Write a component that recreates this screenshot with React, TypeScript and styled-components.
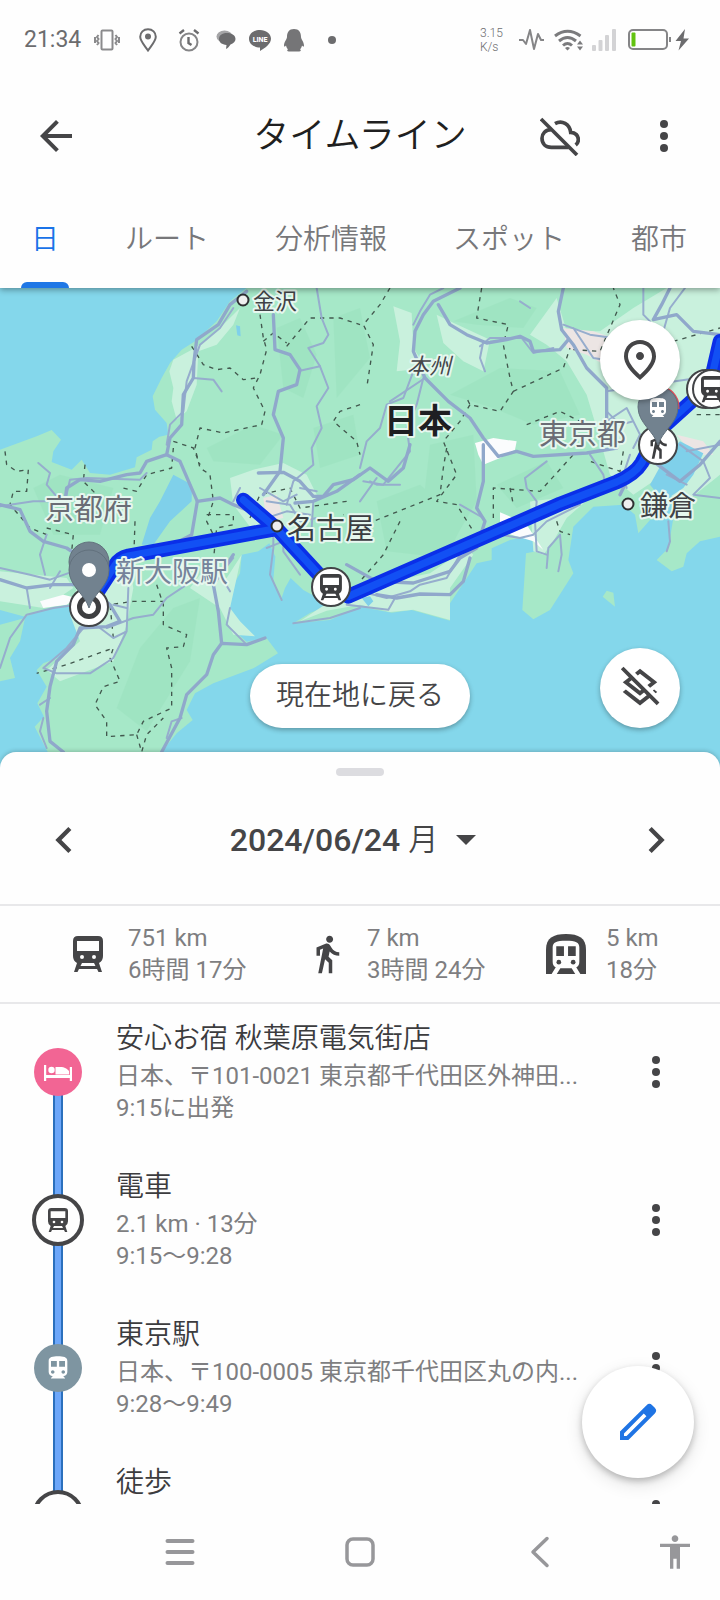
import React from "react";
import styled, { createGlobalStyle, css } from "styled-components";
import {
  MdAccessibility,
  MdArrowBack,
  MdChevronLeft,
  MdChevronRight,
  MdDirectionsTransit,
  MdDirectionsWalk,
  MdOutlineLayersClear,
  MdOutlinePlace,
} from "react-icons/md";

const sans = `Roboto, "Noto Sans CJK JP", sans-serif`;
const ink = "#454547";
const muted = "#7e7e81";

const GlobalStyle = createGlobalStyle`
  * { box-sizing: border-box; }
  body { margin: 0; background: #fefefe; font-family: ${sans}; color: ${ink}; }
  button { margin: 0; padding: 0; border: 0; background: none; font: inherit; color: inherit; cursor: pointer; }
`;

const Page = styled.div`
  display: flex;
  flex-direction: column;
  height: 100vh;
  background: #fefefe;
`;

/* ---------- status bar ---------- */

const StatusBar = styled.div`
  display: flex;
  justify-content: space-between;
  align-items: center;
  height: 80px;
  padding: 0 18px 0 24px;
  color: #6c6c6e;
`;

const StatusGroup = styled.div`
  display: flex;
  align-items: center;
`;

const Clock = styled.time`
  width: 62px;
  font-size: 23px;
  line-height: 32px;
`;

const Slot = styled.span<{ $w: number }>`
  display: flex;
  justify-content: center;
  width: ${(p) => p.$w}px;
`;

const Speed = styled.span`
  width: 38px;
  font-size: 12px;
  font-weight: 300;
  line-height: 14px;
`;

/* ---------- app bar and tabs ---------- */

const Header = styled.header`
  position: relative;
  z-index: 1;
  flex: none;
  background: #fefefe;
  box-shadow: 0 2px 6px rgba(0, 0, 0, 0.35);
`;

const AppBar = styled.div`
  display: grid;
  grid-template-columns: 1fr auto 1fr;
  align-items: center;
  height: 112px;
  padding: 0 28px;
`;

const Title = styled.h1`
  margin: 0;
  font-size: 36px;
  font-weight: 350;
  line-height: 48px;
  color: #1f1f20;
`;

const Actions = styled.div`
  display: flex;
  justify-content: flex-end;
  gap: 48px;
`;

const IconButton = styled.button`
  display: flex;
  flex: none;
  align-items: center;
  justify-content: center;
  width: 56px;
  height: 56px;
  color: ${ink};
`;

const Tabs = styled.nav`
  display: flex;
  gap: 66px;
  height: 96px;
  padding-left: 31px;
  overflow: hidden;
`;

const Tab = styled.button<{ $active?: boolean }>`
  position: relative;
  flex: none;
  height: 96px;
  font-size: 28px;
  font-weight: 350;
  line-height: 40px;
  white-space: nowrap;
  color: ${(p) => (p.$active ? "#1a73e8" : "#77777a")};
  ${(p) =>
    p.$active &&
    css`
      &::after {
        content: "";
        position: absolute;
        bottom: 0;
        left: -10px;
        right: -10px;
        height: 6px;
        border-radius: 6px 6px 0 0;
        background: #1f77e6;
      }
    `}
`;

/* ---------- map ---------- */

const MapArea = styled.section`
  position: relative;
  flex: none;
  height: 480px;
  background: #84d7eb;
`;

const MapSvg = styled.svg`
  display: block;
  width: 100%;
  height: 100%;
`;

const floating = css`
  position: absolute;
  display: flex;
  align-items: center;
  justify-content: center;
  background: #fff;
  color: ${ink};
  box-shadow: 0 2px 5px rgba(0, 0, 0, 0.3);
`;

const MapButton = styled.button<{ $edge: "top" | "bottom" }>`
  ${floating}
  right: 40px;
  ${(p) => (p.$edge === "top" ? "top: 32px;" : "bottom: 40px;")}
  width: 80px;
  height: 80px;
  border-radius: 50%;
`;

const RecenterRow = styled.div`
  position: absolute;
  left: 0;
  right: 0;
  bottom: 40px;
  display: flex;
  justify-content: center;
  pointer-events: none;
`;

const Recenter = styled.button`
  ${floating}
  position: static;
  height: 64px;
  padding: 0 26px;
  border-radius: 32px;
  font-size: 28px;
  font-weight: 350;
  line-height: 40px;
  pointer-events: auto;
`;

/* ---------- bottom sheet ---------- */

const Sheet = styled.main`
  position: relative;
  display: flex;
  flex: 1 1 0;
  flex-direction: column;
  min-height: 0;
  margin-top: -16px;
  border-radius: 16px 16px 0 0;
  background: #fefefe;
  box-shadow: 0 -1px 4px rgba(0, 0, 0, 0.2);
`;

const Handle = styled.div`
  flex: none;
  width: 48px;
  height: 8px;
  margin: 16px auto 0;
  border-radius: 4px;
  background: #dcdce0;
`;

const DateBar = styled.div`
  display: flex;
  flex: none;
  align-items: center;
  justify-content: space-between;
  height: 130px;
  padding: 0 36px;
  border-bottom: 2px solid #e8e8ea;
`;

const DateButton = styled.button`
  display: flex;
  align-items: center;
  gap: 8px;
  padding-right: 14px;
  font-size: 32px;
  font-weight: 500;
  line-height: 40px;
`;

const Weekday = styled.span`
  font-size: 30px;
  font-weight: 350;
`;

const Caret = styled.span`
  margin-left: 10px;
  border: 10px solid transparent;
  border-top-color: ${ink};
  border-bottom: 0;
`;

const Stats = styled.section`
  display: grid;
  flex: none;
  grid-template-columns: 1fr 1fr 146px;
  align-items: center;
  height: 98px;
  padding: 0 48px;
  border-bottom: 2px solid #e8e8ea;
`;

const Stat = styled.div`
  display: flex;
  align-items: center;
`;

const StatIcon = styled.span`
  display: flex;
  flex: none;
  justify-content: center;
  width: 80px;
`;

const Line = styled.p`
  margin: 0;
  font-size: 24px;
  font-weight: 400;
  line-height: 32px;
  white-space: nowrap;
  color: ${muted};
`;

const ListArea = styled.div`
  position: relative;
  flex: 1 1 0;
  min-height: 0;
`;

const List = styled.ol`
  height: 100%;
  margin: 0;
  padding: 0;
  overflow-y: auto;
  list-style: none;
  scrollbar-width: none;
`;

const Entry = styled.li`
  display: grid;
  grid-template-columns: 116px 1fr 128px;
  height: 148px;
`;

const Rail = styled.div`
  display: grid;
  justify-items: center;
`;

const Track = styled.span<{ $first?: boolean }>`
  grid-area: 1 / 1;
  width: 10px;
  margin-top: ${(p) => (p.$first ? 68 : 0)}px;
  border: solid #2b70bd;
  border-width: 0 2px;
  background: #6da7fa;
`;

const Node = styled.span<{ $fill?: string }>`
  z-index: 1;
  display: flex;
  grid-area: 1 / 1;
  align-items: center;
  justify-content: center;
  width: ${(p) => (p.$fill ? 48 : 52)}px;
  height: ${(p) => (p.$fill ? 48 : 52)}px;
  margin-top: ${(p) => (p.$fill ? 44 : 42)}px;
  border: ${(p) => (p.$fill ? "0" : `4px solid ${ink}`)};
  border-radius: 50%;
  background: ${(p) => p.$fill || "#fefefe"};
  color: ${(p) => (p.$fill ? "#fff" : ink)};
`;

const Details = styled.div`
  min-width: 0;
  padding-top: 17px;
`;

const Place = styled.h2`
  margin: 0 0 3px;
  font-size: 28px;
  font-weight: 350;
  line-height: 36px;
  color: #3c3c3e;
`;

const EntryMenu = styled(IconButton)`
  margin: 40px 0 0 36px;
`;

const Fab = styled.button`
  ${floating}
  right: 26px;
  bottom: 26px;
  width: 112px;
  height: 112px;
  border-radius: 50%;
  color: #1f74e4;
  box-shadow: 0 3px 6px rgba(0, 0, 0, 0.22), 0 6px 18px rgba(0, 0, 0, 0.12);
`;

const SystemNav = styled.nav`
  position: relative;
  z-index: 1;
  display: grid;
  flex: none;
  grid-template-columns: 2fr 2fr 2fr 1fr;
  height: 96px;
  padding-left: 12.5%;
  background: #fefefe;
`;

const NavButton = styled.button`
  display: flex;
  align-items: center;
  justify-content: center;
  color: #97979a;
`;

/* ---------- icons ---------- */

const Dots = () => (
  <svg width="8" height="32" viewBox="0 0 8 32" fill="currentColor" aria-hidden>
    <circle cx="4" cy="4" r="4" />
    <circle cx="4" cy="16" r="4" />
    <circle cx="4" cy="28" r="4" />
  </svg>
);

const CloudOff = () => (
  <svg width="40" height="39" viewBox="0 0 120 117" fill="none" stroke="currentColor" strokeWidth="11" aria-hidden>
    <path d="M3 6 111 114" />
    <path d="M34 38C16 38 6 50 6 64 6 80 17 91 34 91H86" />
    <path d="M45 20C66 8 89 21 92 46 107 46 115 57 115 68 115 75 112 80 107 84" />
  </svg>
);

const trainShape = (
  <path
    fillRule="evenodd"
    d="M5 0H25Q30 0 30 5V20Q30 25 26 27L29 36H25.500L24 33H6L4.500 36H1L4 27Q0 25 0 20V5Q0 0 5 0ZM4 5V15H26V5ZM9 19a2 2 0 1 0 0 4 2 2 0 0 0 0-4ZM21 19a2 2 0 1 0 0 4 2 2 0 0 0 0-4ZM9 27 7.500 30H22.500L21 27Z"
  />
);

const TrainIcon = ({ height }: { height: number }) => (
  <svg height={height} width={(height * 30) / 36} viewBox="0 0 30 36" fill="currentColor" aria-hidden>
    {trainShape}
  </svg>
);

const SubwayIcon = () => (
  <svg width="40" height="40" viewBox="0 0 39 39" fill="currentColor" aria-hidden>
    <path d="M0 39V15C0 4 7 0 19.500 0S39 4 39 15V39Z" />
    <path d="M6.500 27V13C6.500 8 10 6.500 19.500 6.500S32.500 8 32.500 13V27Q32.500 31 29.500 32.500L33.500 39H28.500L25 33.500H14L10.500 39H5.500L9.500 32.500Q6.500 31 6.500 27Z" fill="#fefefe" />
    <path d="M10 12h7.500v9.500H10ZM21.500 12H29v9.500h-7.500Z" />
    <circle cx="12.500" cy="27.500" r="2.300" />
    <circle cx="26.500" cy="27.500" r="2.300" />
  </svg>
);

const BedIcon = () => (
  <svg width="28" height="17" viewBox="0 0 28 17" fill="currentColor" aria-hidden>
    <path d="M0 1h2.200V11H25.800V3H28V17h-2.200V14H2.200V17H0Z" />
    <circle cx="7.500" cy="6" r="3.200" />
    <path d="M11.500 3h4.500c5 0 7 2 9 4v3.500H11.500Z" />
  </svg>
);

const Pencil = () => (
  <svg width="48" height="48" viewBox="0 0 24 24" fill="currentColor" aria-hidden>
    <path
      fillRule="evenodd"
      d="M3 21V16.800L16.300 3.600a2 2 0 0 1 2.800 0l1.300 1.300a2 2 0 0 1 0 2.800L7.200 21ZM5 19h1.300L16.200 9.100 14.900 7.800 5 17.700Z"
    />
  </svg>
);

const Vibrate = () => (
  <svg width="26" height="22" viewBox="0 0 26 22" fill="none" stroke="#8a8a8c" strokeWidth="2" aria-hidden>
    <rect x="7.500" y="1.500" width="11" height="19" rx="1" />
    <path d="M4.500 6 3 8l1.500 2L3 12l1.500 2L3 16M1 8v6M21.500 6 23 8l-1.500 2 1.500 2-1.500 2 1.500 2M25 8v6" />
  </svg>
);

const PlaceSmall = () => (
  <svg width="18" height="24" viewBox="0 0 18 24" fill="none" stroke="#6c6c6e" strokeWidth="2" aria-hidden>
    <path d="M9 1.200C13.500 1.200 16.800 4.500 16.800 8.700 16.800 13 12 18 9 22.500 6 18 1.200 13 1.200 8.700 1.200 4.500 4.500 1.200 9 1.200Z" />
    <circle cx="9" cy="8.500" r="3" fill="#6c6c6e" stroke="none" />
  </svg>
);

const Alarm = () => (
  <svg width="22" height="24" viewBox="0 0 22 24" fill="none" stroke="#858587" strokeWidth="2" aria-hidden>
    <circle cx="11" cy="14" r="8.500" />
    <path d="M10.500 9v6l3 2M1.500 5.500 6 2M20.500 5.500 16 2" stroke="#6c6c6e" strokeWidth="2.400" />
  </svg>
);

const Chat = () => (
  <svg width="20" height="20" viewBox="0 0 20 20" aria-hidden>
    <ellipse cx="8.500" cy="6.500" rx="8" ry="6" fill="#a5a5a7" />
    <path d="M11 3c5 0 8.500 2.500 8.500 6 0 2.500-2 4.600-5 5.500-1.500 2-2.500 3.500-4.500 4.500l.5-4C6 14.500 3 12.500 3 9s3-6 8-6Z" fill="#6c6c6e" />
  </svg>
);

const LineLogo = () => (
  <svg width="22" height="21" viewBox="0 0 22 21" aria-hidden>
    <path d="M11 0c6 0 11 3.800 11 8.800 0 5-6 9.500-11 12.200v-3.500C5 17.500 0 14 0 8.800S5 0 11 0Z" fill="#6c6c6e" />
    <text x="11" y="11.500" textAnchor="middle" fontSize="7" fontWeight="800" fill="#fff" fontFamily={sans}>
      LINE
    </text>
  </svg>
);

const Penguin = () => (
  <svg width="20" height="23" viewBox="0 0 20 23" fill="#757577" aria-hidden>
    <path d="M10 0c5 0 7 3.500 7 8 0 2 3 5 3 8.500 0 1.500-1 1.500-2 0-.3 1.600-.8 2.700-2 3.800 1.500.7 1 2.200-1 2.200H5c-2 0-2.500-1.500-1-2.200-1.200-1.100-1.700-2.200-2-3.800-1 1.500-2 1.500-2 0C0 13 3 10 3 8c0-4.500 2-8 7-8Z" />
  </svg>
);

const Pulse = () => (
  <svg width="25" height="22" viewBox="0 0 25 22" fill="none" stroke="#858587" strokeWidth="2" aria-hidden>
    <path d="M0 11h4l3 4 4-14 4 19 4-15 3 6h3" strokeLinejoin="round" />
  </svg>
);

const Wifi = () => (
  <svg width="30" height="22" viewBox="0 0 30 22" fill="none" stroke="#7b7b7d" strokeWidth="3" aria-hidden>
    <path d="M1 7Q13.500-2.500 26.500 7M5 12Q13.500 5 22 12M9 16.500Q13.500 12.500 18 16.500" />
    <path d="M11 19q2.500-2 5 0l-2.500 2.500ZM23 15.500l3-4 3 4ZM23 17.500l3 4 3-4Z" fill="#7b7b7d" stroke="none" />
  </svg>
);

const Signal = () => (
  <svg width="24" height="22" viewBox="0 0 24 22" fill="#d3d3d5" aria-hidden>
    <rect x="0" y="16" width="4" height="6" rx="1" />
    <rect x="6.500" y="11" width="4" height="11" rx="1" />
    <rect x="13" y="6" width="4" height="16" rx="1" />
    <rect x="20" y="0" width="4" height="22" rx="1" />
  </svg>
);

const Battery = () => (
  <svg width="62" height="22" viewBox="0 0 62 22" aria-hidden>
    <rect x="1" y="1" width="38" height="19" rx="4" fill="none" stroke="#858587" strokeWidth="2" />
    <rect x="3.500" y="3.500" width="4" height="14" rx="1" fill="#62c310" />
    <rect x="41" y="8" width="2" height="5" fill="#858587" />
    <path d="M57 0 47.500 12H53L50.500 21.500 61 9.500H55.500Z" fill="#6c6c6e" />
  </svg>
);

/* ---------- map drawing ---------- */

/* Coastline and land cover, in a 2160 x 1440 grid. */
const land = [
  "M740 0 690 40 650 100 585 160 545 185 510 225 485 270 458 325 465 365 500 405 505 440 478 446 458 460 455 485 410 508 405 538 330 560 270 555 245 515 215 545 155 522 160 490 183 455 155 426 110 445 0 485V966L75 986 130 965 205 950 235 1010 240 1046 180 1106 130 1126 110 1146 140 1196 112 1246 132 1286 104 1316 140 1386 170 1440H470L485 1392 530 1336 578 1296 560 1266 585 1216 640 1186 760 1141 834 1096 800 1051 740 1061 700 1026 680 966 685 916 720 856 725 800 775 790 808 766 826 806 820 876 842 938 855 900 872 870 910 906 990 950 930 975 880 1006 990 996 1080 956 1175 974 1235 966 1350 998 1350 946 1390 886 1430 826 1475 816 1475 781 1530 756 1580 746 1630 786 1578 796 1567 966 1600 994 1650 966 1720 856 1705 816 1720 716 1780 656 1870 650 1905 680 1915 736 1950 696 1990 690 1960 640 2000 500 2050 460 2110 496 2080 566 2060 640 2020 690 2005 780 1970 816 2015 850 2050 836 2060 796 2100 760 2160 746V0Z",
  "M1808 926 1820 908 1840 914 1845 956Z",
  "M0 1010 75 990 60 1060 30 1110 45 1170 0 1180Z",
];
const plains = [
  "M720 60 650 130 585 180 520 215 508 250 520 300 515 340 530 395 560 370 590 290 595 190 650 170 700 110Z",
  "M690 570 760 545 850 525 920 560 950 620 930 700 850 760 760 730 700 650Z",
  "M1180 55 1235 75 1240 180 1280 240 1190 250 1200 160Z",
  "M1310 80 1350 100 1470 155 1450 250 1390 220 1330 165Z",
  "M1590 140 1670 30 1700 130 1800 130 1900 60 2000 0 2160 0V560L2060 640 2000 620 1960 580 1900 620 1830 560 1790 420 1760 320 1700 220 1640 170Z",
  "M230 900 390 840 400 900 380 1010 340 1120 180 1180 140 1146 240 1060 210 980Z",
  "M680 870 725 800 710 870 690 960 720 1000 765 1045 700 1040 660 960 570 900 600 860Z",
  "M1080 900 1290 856 1400 780 1420 800 1350 900 1350 996 1240 965 1170 972 1080 950 980 968 900 1000 990 940Z",
  "M0 850 200 870 220 900 130 960 0 940Z",
  "M1590 640 1780 620 1700 690 1660 760 1630 800 1600 790Z",
];
const hills = [
  "M830 120 900 90 950 200 910 330 850 300Z",
  "M620 480 760 410 850 440 780 530 640 520Z",
  "M1000 90 1080 60 1110 210 1010 330Z",
  "M1360 100 1530 30 1610 60 1570 120 1430 110Z",
  "M1350 320 1500 240 1680 250 1740 380 1600 410 1480 360Z",
  "M1290 470 1420 440 1430 640 1360 760 1260 730Z",
  "M1490 590 1640 520 1690 600 1550 660Z",
  "M1130 640 1260 590 1390 700 1340 810 1160 790Z",
  "M420 1080 520 960 600 930 570 1120 440 1330 350 1260Z",
  "M100 600 180 560 340 600 300 740 160 740Z",
  "M940 420 1060 380 1080 500 960 540Z",
];

const urban = [
  "M790 630 830 620 850 690 800 700Z",
  "M1690 120 1780 130 1840 150 1830 240 1760 200 1700 180Z",
  "M2030 440 2110 460 2140 500 2080 500Z",
];
const bare = [
  "M1425 465 1480 450 1550 460 1545 485 1500 510 1450 530 1435 500Z",
  "M1500 673 1535 688 1580 710 1630 786 1600 760 1500 730Z",
  "M120 940 190 920 230 930 200 950 130 960Z",
];

const lakes = ["M520 560 576 590 575 640 510 700 460 770 425 770 450 690 480 640Z", "M708 112 720 115 722 145 712 142Z", "M1085 930 1110 925 1120 940 1105 955Z"];

const highways = [
  "M740 10 690 50 655 110 590 155 582 220 580 270 550 320 545 410 510 450 500 500 440 520 420 555 380 560 300 580 240 575 200 600 195 640",
  "M500 500 540 520 570 590 592 640 660 630 700 650 800 690",
  "M820 80 825 185 870 200 900 245 890 290 835 310 820 380 850 450 840 550 790 620",
  "M775 555 850 553 900 580 940 625 970 625 1000 590 1060 575 1110 540 1165 580 1210 540 1230 470",
  "M885 645 940 640 1010 610 1080 560",
  "M1380 0 1300 40 1270 80 1245 130 1240 190 1275 270 1345 340 1410 390 1450 450 1495 505 1550 490 1600 505 1760 495 1850 480",
  "M1315 50 1350 110 1400 140 1460 165 1520 155 1560 145 1590 160 1600 190 1680 185 1705 155",
  "M1690 0 1675 70 1685 125 1720 170 1760 240 1820 300 1820 420",
  "M2010 0 1985 50 1960 95 2030 80 2080 130 2160 140",
  "M1450 470 1450 580 1430 660 1455 700 1430 780 1380 810 1350 850 1240 885 1130 880 1040 830",
  "M0 650 60 665 90 730 130 760 200 780 260 820",
  "M0 875 80 900 160 890 260 890 330 950 360 1000 320 1016 240 1020 220 1070 170 1120 150 1196 140 1270 150 1360 190 1392",
  "M485 1392 540 1290 560 1220 620 1160 640 1100 665 1066 740 1070 795 1050",
  "M665 1066 655 970 640 890 700 800",
  "M592 640 575 740 500 780 390 810",
  "M1130 920 1190 930 1260 918 1350 920 1390 880 1410 810",
  "M1860 620 1900 540 1960 520 2040 580 2100 530 2160 460",
];

const roads = [
  "M700 60 660 120 600 170 560 280 550 370 510 410 500 470",
  "M580 270 640 275 665 310",
  "M950 0 965 90 985 140 970 165 925 180 960 235 985 300 950 355 965 420 935 480 940 530 880 580 860 650",
  "M900 248 960 235",
  "M115 525 150 555 140 590 165 620 195 640 100 640 0 655",
  "M195 640 210 575 260 570 420 575 440 555",
  "M1330 0 1290 20 1260 70 1240 110",
  "M1240 250 1210 330 1160 350 1140 420 1100 460 1080 540",
  "M1270 270 1250 350 1220 420 1230 490 1150 590 1090 580",
  "M1275 270 1170 340",
  "M1450 160 1440 210 1455 250M1440 175 1470 150 1540 150 1565 150 1600 195 1660 180",
  "M1560 40 1590 60M1690 110 1770 140 1840 150M1720 120 1780 210 1840 220",
  "M1930 0 1930 80 1950 100M2055 0 2010 60 1990 130",
  "M1820 400 1880 360 1920 440 1900 480M1820 370 1860 410 1900 400M1820 310 2160 260",
  "M1640 520 1575 570 1580 600 1610 640 1605 700 1610 790 1640 800",
  "M1770 500 1810 560 1820 610M1890 500 1870 560 1880 600",
  "M2060 490 2160 470M2040 470 2110 520 2130 570 2080 620 2160 630M2000 560 2060 590",
  "M2005 700 2010 760 2000 790",
  "M1640 840 1645 780 1680 740 1685 800 1675 850",
  "M0 840 90 860 150 875 220 850M140 740 120 800 135 860",
  "M0 1140 30 1050 80 980 160 960 230 950M80 900 90 960M180 850 150 900",
  "M250 1020 200 1080 130 1140 170 1156 270 1156 340 1110 380 1030 385 900M300 1020 340 1050 380 1030",
  "M320 1020 400 990 460 980 500 930 560 890M340 950 380 960",
  "M500 1350 515 1300 545 1290M120 1250 150 1230M140 1380 120 1330 130 1290",
  "M690 960 680 1010 740 1070M700 810 660 860 690 910",
  "M820 700 820 780 810 860 845 936M850 720 850 790 900 860M800 640 870 650 900 700 950 690",
  "M770 740 800 690 860 670 930 680M700 640 720 600M900 600 950 610M940 640 935 720",
  "M780 600 850 640 890 620M800 780 850 760",
  "M1040 950 1165 965 1185 930M1080 910 1160 930 1230 910 1260 890 1340 870 1380 800",
  "M1380 650 1450 690M1080 640 1130 570M1110 580 1130 590 1200 590",
  "M1500 740 1560 750 1600 740 1640 700 1740 650",
  "M880 1006 990 990 1080 960",
];

const borders = [
  "M780 80 790 150 800 185 780 260 760 300 795 370 785 410 670 435 600 420 585 480 600 540 630 560 640 640 620 700 650 760",
  "M575 175 610 230 650 245 690 240 730 275 770 270",
  "M860 175 930 90 1020 90 1080 110",
  "M790 160 820 135 860 165",
  "M520 460 580 480 600 530M520 480 515 540 440 560 410 610 370 600",
  "M1080 350 1020 370 1000 400 1070 460 1080 500",
  "M15 490 20 530 50 550 85 545 80 610 40 610 30 650 90 720 140 740",
  "M255 530 250 580 290 620 400 660M405 700 400 850",
  "M140 720 220 740 215 790",
  "M1170 0 1140 50 1090 110 1120 170 1100 300",
  "M1445 0 1430 90 1525 110 1510 170 1530 270 1540 310 1500 370 1410 350 1400 330",
  "M1540 310 1690 240 1710 180M1720 185 1800 190 1860 50 1840 0",
  "M1410 350 1380 400 1330 460 1370 560 1310 640 1370 650 1420 730",
  "M1340 480 1330 540 1320 620 1120 700 1030 680",
  "M1480 690 1480 600 1620 610 1720 500",
  "M2020 160 2160 120M1870 490 1860 550 1770 520M2090 380 2160 380",
  "M1200 700 1150 800 1080 880M1580 410 1680 370 1780 420",
  "M750 690 780 620 870 600 900 660 1040 640",
  "M620 680 700 680 700 710 650 720 640 820",
  "M470 890 490 950 490 1010 560 1040 550 1076 500 1080 515 1140 515 1260 430 1300 410 1340 320 1346 320 1300 285 1250 310 1196 360 1180 330 1110 340 1080 200 1130 110 1156",
  "M340 1050 330 950 400 940 490 940M410 1340 425 1392 440 1340 490 1290",
  "M1670 700 1680 730 1710 740M1530 600 1540 650",
];

const route =
  "M290 916 345 832Q358 810 385 804L830 722M730 636 830 722 975 880 1045 925 1680 648 1850 582Q1905 558 1925 525L1975 430 2130 290 2160 160";

const labels = [
  { text: "金沢", x: 253, y: 21, size: 22, color: "#404246" },
  { text: "日本", x: 384, y: 145, size: 34, color: "#1e1f22", weight: 700 },
  { text: "東京都", x: 539, y: 157, size: 29, color: "#6a6d75" },
  { text: "鎌倉", x: 640, y: 228, size: 28, color: "#404246" },
  { text: "名古屋", x: 287, y: 251, size: 29, color: "#3b3d41" },
  { text: "京都府", x: 45, y: 232, size: 29, color: "#6a6d75" },
  { text: "新大阪駅", x: 116, y: 294, size: 28, color: "#75839a" },
];

const towns = [
  [243, 12],
  [628, 216],
  [277, 238],
];

const Disc = ({ x, y, children }: { x: number; y: number; children?: React.ReactNode }) => (
  <g transform={`translate(${x} ${y})`}>
    <circle r="19" fill="#fff" stroke="#424447" strokeWidth="2" />
    {children}
  </g>
);

const DiscTrain = () => (
  <g transform="translate(-11 -13) scale(.73)" fill="#3d3e40">
    {trainShape}
  </g>
);

const Pin = ({ x, y, children }: { x: number; y: number; children?: React.ReactNode }) => (
  <g transform={`translate(${x} ${y})`}>
    <path d="M0-58A20 20 0 0 1 20-38C20-22 4-14 0 0-4-14-20-22-20-38A20 20 0 0 1 0-58Z" fill="#72828f" stroke="#62717d" />
    {children}
  </g>
);

const JapanMap = () => (
  <MapSvg viewBox="0 0 720 480" preserveAspectRatio="xMidYMid slice" role="img" aria-label="日本">
    <g transform="scale(.333333)" fill="none" strokeLinejoin="round" strokeLinecap="round">
      <g fill="#a6e8c8">{land.map((d) => <path key={d} d={d} />)}</g>
      <g fill="#c9f1dd">{plains.map((d) => <path key={d} d={d} />)}</g>
      <g fill="#94dfb9" opacity="0.350">{hills.map((d) => <path key={d} d={d} />)}</g>
      <g fill="#ece5e4">{urban.map((d) => <path key={d} d={d} />)}</g>
      <g fill="#fbfcfd">{bare.map((d) => <path key={d} d={d} />)}</g>
      <g fill="#7fd0ea">{lakes.map((d) => <path key={d} d={d} />)}</g>
      <path d="M1950 590 2000 500 2040 460 2110 496 2080 560 2050 600 1990 640Z" fill="#7fd0ea" />
      <g stroke="#42584e" strokeWidth="4" strokeDasharray="13 15" strokeLinecap="butt">
        {borders.map((d) => <path key={d} d={d} />)}
      </g>
      <g stroke="#96adcd" strokeWidth="6">{roads.map((d) => <path key={d} d={d} />)}</g>
      <g stroke="#90a8cb" strokeWidth="10">{highways.map((d) => <path key={d} d={d} />)}</g>
      <path d={route} stroke="#0a2fe8" strokeWidth="44" />
      <path d={route} stroke="#1250f4" strokeWidth="22" />
    </g>
    {towns.map(([x, y]) => (
      <circle key={x} cx={x} cy={y} r="5.500" fill="#efefef" stroke="#2e2f31" strokeWidth="2" />
    ))}
    <g fontFamily={sans} stroke="#e6f7ef" strokeWidth="4" strokeLinejoin="round" paintOrder="stroke">
      {labels.map((l) => (
        <text key={l.text} x={l.x} y={l.y} fontSize={l.size} fontWeight={l.weight || 400} fill={l.color}>
          {l.text}
        </text>
      ))}
      <text x="407" y="86" fontSize="22" fontStyle="italic" fill="#45474b">
        本州
      </text>
    </g>
    <Disc x={706} y={101} />
    <Disc x={712} y={101}>
      <DiscTrain />
    </Disc>
    <Disc x={331} y={299}>
      <DiscTrain />
    </Disc>
    <Disc x={658} y={157}>
      <MdDirectionsWalk x="-15" y="-15" size={30} color="#3d3e40" />
    </Disc>
    <path d="M664 100A20 20 0 0 1 678 121" fill="none" stroke="#e04b58" strokeWidth="3" />
    <Pin x={658} y={157}>
      <MdDirectionsTransit x="-12" y="-49" size={24} color="#fff" />
    </Pin>
    <Disc x={89} y={319}>
      <circle r="9.500" fill="none" stroke="#3d3e40" strokeWidth="5" />
    </Disc>
    <Pin x={89} y={312} />
    <Pin x={89} y={320}>
      <circle cy="-38" r="7" fill="#fff" />
    </Pin>
  </MapSvg>
);

/* ---------- data ---------- */

const tabs = ["日", "ルート", "分析情報", "スポット", "都市"];

const stats = [
  { icon: <TrainIcon height={36} />, distance: "751 km", time: "6時間 17分" },
  { icon: <MdDirectionsWalk size={42} />, distance: "7 km", time: "3時間 24分" },
  { icon: <SubwayIcon />, distance: "5 km", time: "18分" },
];

type EntryData = { title: string; lines: string[]; fill?: string; icon?: React.ReactNode };

const entries: EntryData[] = [
  {
    title: "安心お宿 秋葉原電気街店",
    lines: ["日本、〒101-0021 東京都千代田区外神田...", "9:15に出発"],
    fill: "#f26594",
    icon: <BedIcon />,
  },
  { title: "電車", lines: ["2.1 km · 13分", "9:15〜9:28"], icon: <TrainIcon height={24} /> },
  {
    title: "東京駅",
    lines: ["日本、〒100-0005 東京都千代田区丸の内...", "9:28〜9:49"],
    fill: "#7e95a1",
    icon: <MdDirectionsTransit size={28} />,
  },
  { title: "徒歩", lines: [] },
];

export default function App() {
  return (
    <Page>
      <GlobalStyle />
      <Header>
        <StatusBar>
          <StatusGroup>
            <Clock>21:34</Clock>
            <Slot $w={41}><Vibrate /></Slot>
            <Slot $w={41}><PlaceSmall /></Slot>
            <Slot $w={41}><Alarm /></Slot>
            <Slot $w={34}><Chat /></Slot>
            <Slot $w={34}><LineLogo /></Slot>
            <Slot $w={34}><Penguin /></Slot>
            <Slot $w={41}>
              <svg width="8" height="8" viewBox="0 0 8 8" fill="currentColor" aria-hidden>
                <circle cx="4" cy="4" r="4" />
              </svg>
            </Slot>
          </StatusGroup>
          <StatusGroup>
            <Speed>
              3.15
              <br />
              K/s
            </Speed>
            <Slot $w={27}><Pulse /></Slot>
            <Slot $w={47}><Wifi /></Slot>
            <Slot $w={24}><Signal /></Slot>
            <Slot $w={86}><Battery /></Slot>
          </StatusGroup>
        </StatusBar>
        <AppBar>
          <IconButton aria-label="戻る"><MdArrowBack size={48} /></IconButton>
          <Title>タイムライン</Title>
          <Actions>
            <IconButton aria-label="バックアップ オフ"><CloudOff /></IconButton>
            <IconButton aria-label="メニュー"><Dots /></IconButton>
          </Actions>
        </AppBar>
        <Tabs>
          {tabs.map((t, i) => (
            <Tab key={t} $active={i === 0}>{t}</Tab>
          ))}
        </Tabs>
      </Header>

      <MapArea>
        <JapanMap />
        <MapButton $edge="top" aria-label="スポット"><MdOutlinePlace size={48} /></MapButton>
        <RecenterRow>
          <Recenter>現在地に戻る</Recenter>
        </RecenterRow>
        <MapButton $edge="bottom" aria-label="レイヤ"><MdOutlineLayersClear size={46} /></MapButton>
      </MapArea>

      <Sheet>
        <Handle />
        <DateBar>
          <IconButton aria-label="前の日"><MdChevronLeft size={52} /></IconButton>
          <DateButton>
            2024/06/24 <Weekday>月</Weekday>
            <Caret />
          </DateButton>
          <IconButton aria-label="次の日"><MdChevronRight size={52} /></IconButton>
        </DateBar>
        <Stats>
          {stats.map((s) => (
            <Stat key={s.distance}>
              <StatIcon>{s.icon}</StatIcon>
              <div>
                <Line>{s.distance}</Line>
                <Line>{s.time}</Line>
              </div>
            </Stat>
          ))}
        </Stats>
        <ListArea>
          <List>
            {entries.map((e, i) => (
              <Entry key={e.title}>
                <Rail>
                  <Track $first={i === 0} />
                  <Node $fill={e.fill}>{e.icon}</Node>
                </Rail>
                <Details>
                  <Place>{e.title}</Place>
                  {e.lines.map((l) => (
                    <Line key={l}>{l}</Line>
                  ))}
                </Details>
                <EntryMenu aria-label="その他"><Dots /></EntryMenu>
              </Entry>
            ))}
          </List>
          <Fab aria-label="編集"><Pencil /></Fab>
        </ListArea>
      </Sheet>

      <SystemNav>
        <NavButton aria-label="最近のアプリ">
          <svg width="30" height="28" viewBox="0 0 30 28" stroke="currentColor" strokeWidth="4" strokeLinecap="round" aria-hidden>
            <path d="M2.500 3h25M2.500 14h25M2.500 25h25" />
          </svg>
        </NavButton>
        <NavButton aria-label="ホーム">
          <svg width="30" height="30" viewBox="0 0 30 30" fill="none" stroke="currentColor" strokeWidth="3.500" aria-hidden>
            <rect x="2" y="2" width="26" height="26" rx="6" />
          </svg>
        </NavButton>
        <NavButton aria-label="戻る">
          <svg width="20" height="32" viewBox="0 0 20 32" fill="none" stroke="currentColor" strokeWidth="3.500" strokeLinecap="round" strokeLinejoin="round" aria-hidden>
            <path d="M17 2.500 3 16l14 13.500" />
          </svg>
        </NavButton>
        <NavButton aria-label="ユーザー補助"><MdAccessibility size={40} /></NavButton>
      </SystemNav>
    </Page>
  );
}
